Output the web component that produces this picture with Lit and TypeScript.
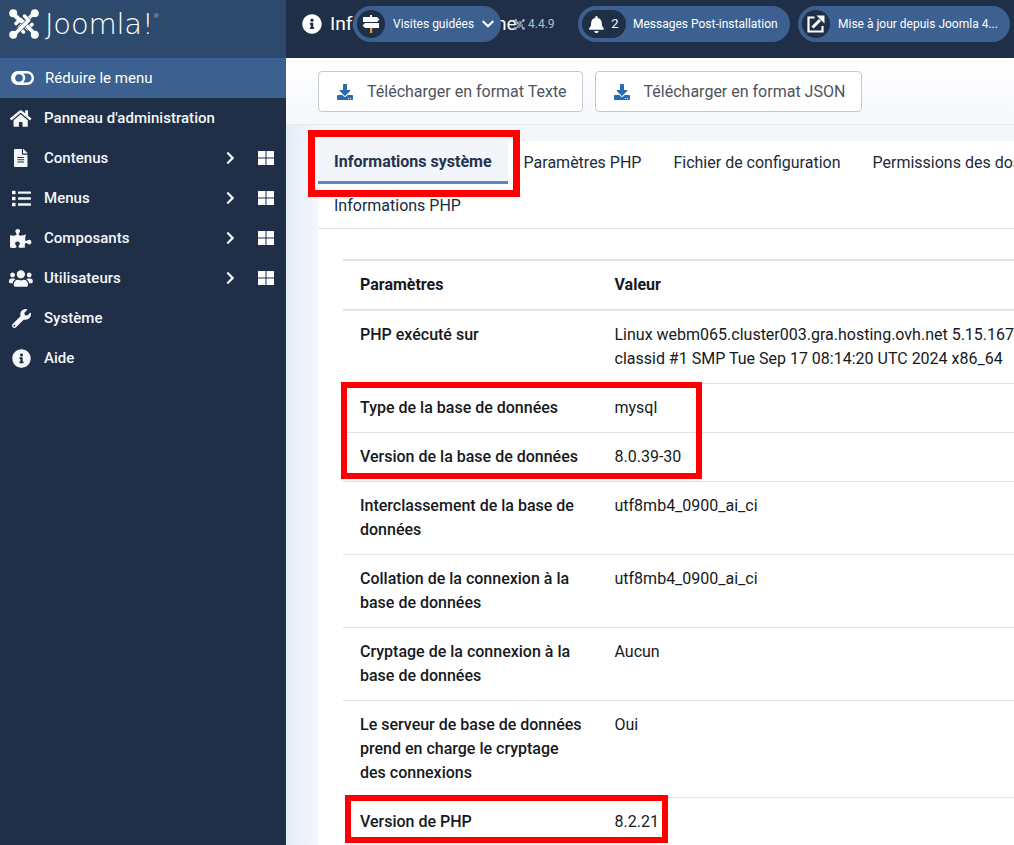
import { LitElement, html, css, svg } from "lit";
import { customElement } from "lit/decorators.js";

const P: Record<string, [number, string]> = {
  info: [512, "M256 8C119.043 8 8 119.083 8 256c0 136.997 111.043 248 248 248s248-111.003 248-248C504 119.083 392.957 8 256 8zm0 110c23.196 0 42 18.804 42 42s-18.804 42-42 42-42-18.804-42-42 18.804-42 42-42zm56 254c0 6.627-5.373 12-12 12h-88c-6.627 0-12-5.373-12-12v-24c0-6.627 5.373-12 12-12h12v-64h-12c-6.627 0-12-5.373-12-12v-24c0-6.627 5.373-12 12-12h64c6.627 0 12 5.373 12 12v100h12c6.627 0 12 5.373 12 12v24z"],
  home: [576, "M280.37 148.26L96 300.11V464a16 16 0 0 0 16 16l112.06-.29a16 16 0 0 0 15.92-16V368a16 16 0 0 1 16-16h64a16 16 0 0 1 16 16v95.64a16 16 0 0 0 16 16.05L464 480a16 16 0 0 0 16-16V300L295.67 148.26a12.19 12.19 0 0 0-15.3 0zM571.6 251.47L488 182.56V44.05a12 12 0 0 0-12-12h-56a12 12 0 0 0-12 12v72.61L318.47 43a48 48 0 0 0-61 0L4.34 251.47a12 12 0 0 0-1.6 16.9l25.5 31A12 12 0 0 0 45.15 301l235.22-193.74a12.19 12.19 0 0 1 15.3 0L530.9 301a12 12 0 0 0 16.9-1.6l25.5-31a12 12 0 0 0-1.7-16.93z"],
  file: [384, "M224 136V0H24C10.7 0 0 10.7 0 24v464c0 13.3 10.7 24 24 24h336c13.3 0 24-10.7 24-24V160H248c-13.2 0-24-10.8-24-24zm64 236c0 6.6-5.4 12-12 12H108c-6.6 0-12-5.4-12-12v-8c0-6.6 5.4-12 12-12h168c6.6 0 12 5.4 12 12v8zm0-64c0 6.6-5.4 12-12 12H108c-6.6 0-12-5.4-12-12v-8c0-6.6 5.4-12 12-12h168c6.6 0 12 5.4 12 12v8zm0-72v8c0 6.6-5.4 12-12 12H108c-6.6 0-12-5.4-12-12v-8c0-6.6 5.4-12 12-12h168c6.6 0 12 5.4 12 12zm96-114.1v6.1H256V0h6.1c6.4 0 12.5 2.5 17 7l97.9 98c4.5 4.5 7 10.6 7 16.9z"],
  list: [512, "M80 368H16a16 16 0 0 0-16 16v64a16 16 0 0 0 16 16h64a16 16 0 0 0 16-16v-64a16 16 0 0 0-16-16zm0-320H16A16 16 0 0 0 0 64v64a16 16 0 0 0 16 16h64a16 16 0 0 0 16-16V64a16 16 0 0 0-16-16zm0 160H16a16 16 0 0 0-16 16v64a16 16 0 0 0 16 16h64a16 16 0 0 0 16-16v-64a16 16 0 0 0-16-16zm416 176H176a16 16 0 0 0-16 16v32a16 16 0 0 0 16 16h320a16 16 0 0 0 16-16v-32a16 16 0 0 0-16-16zm0-320H176a16 16 0 0 0-16 16v32a16 16 0 0 0 16 16h320a16 16 0 0 0 16-16V80a16 16 0 0 0-16-16zm0 160H176a16 16 0 0 0-16 16v32a16 16 0 0 0 16 16h320a16 16 0 0 0 16-16v-32a16 16 0 0 0-16-16z"],
  puzzle: [576, "M519.442 288.651c-41.519 0-59.5 31.593-82.058 31.593C377.409 320.244 432 144 432 144s-196.288 80-196.288-3.297c0-35.827 36.288-46.25 36.288-85.985C272 19.216 243.885 0 210.539 0c-34.654 0-66.366 18.891-66.366 56.346 0 41.364 31.711 59.277 31.711 81.75C175.885 207.719 0 166.758 0 166.758v333.237s178.635 41.047 178.635-28.662c0-22.473-40-40.107-40-81.471 0-37.456 29.25-56.346 63.577-56.346 33.673 0 61.788 19.216 61.788 54.717 0 39.735-36.288 50.158-36.288 85.985 0 60.803 129.675 25.73 181.23 25.73 0 0-34.725-120.101 25.827-120.101 35.962 0 46.423 36.152 86.308 36.152C556.712 416 576 387.99 576 354.443c0-34.199-18.962-65.792-56.558-65.792z"],
  users: [640, "M96 224c35.3 0 64-28.7 64-64s-28.7-64-64-64-64 28.7-64 64 28.7 64 64 64zm448 0c35.3 0 64-28.7 64-64s-28.7-64-64-64-64 28.7-64 64 28.7 64 64 64zm32 32h-64c-17.6 0-33.5 7.1-45.1 18.6 40.3 22.1 68.9 62 75.1 109.4h66c17.7 0 32-14.3 32-32v-32c0-35.3-28.7-64-64-64zm-256 0c61.9 0 112-50.1 112-112S381.9 32 320 32 208 82.1 208 144s50.1 112 112 112zm76.8 32h-8.3c-20.8 10-43.9 16-68.5 16s-47.6-6-68.5-16h-8.3C179.6 288 128 339.6 128 403.2V432c0 26.5 21.5 48 48 48h288c26.5 0 48-21.5 48-48v-28.8c0-63.6-51.6-115.2-115.2-115.2zm-223.7-13.4C161.5 263.1 145.6 256 128 256H64c-35.3 0-64 28.7-64 64v32c0 17.7 14.3 32 32 32h65.9c6.3-47.4 34.9-87.3 75.2-109.4z"],
  wrench: [512, "M507.73 109.1c-2.24-9.03-13.54-12.09-20.12-5.51l-74.36 74.36-67.88-11.31-11.31-67.88 74.36-74.36c6.62-6.62 3.43-17.9-5.66-20.16-47.38-11.74-99.55.91-136.58 37.93-39.64 39.64-50.55 97.1-34.05 147.2L18.74 402.76c-24.99 24.99-24.99 65.51 0 90.5 24.99 24.99 65.51 24.99 90.5 0l213.21-213.21c50.12 16.71 107.47 5.68 147.37-34.22 37.07-37.07 49.7-89.32 37.91-136.73zM64 472c-13.25 0-24-10.75-24-24 0-13.26 10.75-24 24-24s24 10.74 24 24c0 13.25-10.75 24-24 24z"],
  bell: [448, "M224 512c35.32 0 63.97-28.65 63.97-64H160.03c0 35.35 28.65 64 63.97 64zm215.39-149.71c-19.32-20.76-55.47-51.99-55.47-154.29 0-77.7-54.48-139.9-127.94-155.16V32c0-17.67-14.32-32-31.98-32s-31.98 14.33-31.98 32v20.84C118.56 68.1 64.08 130.3 64.08 208c0 102.3-36.15 133.53-55.47 154.29-6 6.45-8.66 14.16-8.61 21.71.11 16.4 12.98 32 32.1 32h383.8c19.12 0 32-15.6 32.1-32 .05-7.55-2.61-15.27-8.61-21.71z"],
  download: [512, "M216 0h80c13.3 0 24 10.7 24 24v168h87.7c17.8 0 26.7 21.5 14.1 34.1L269.7 378.3c-7.5 7.5-19.8 7.5-27.3 0L90.1 226.1c-12.6-12.6-3.7-34.1 14.1-34.1H192V24c0-13.3 10.7-24 24-24zm296 376v112c0 13.3-10.7 24-24 24H24c-13.3 0-24-10.7-24-24V376c0-13.3 10.7-24 24-24h146.7l49 49c20.1 20.1 52.5 20.1 72.6 0l49-49H488c13.3 0 24 10.7 24 24zm-124 88c0-11-9-20-20-20s-20 9-20 20 9 20 20 20 20-9 20-20zm64 0c0-11-9-20-20-20s-20 9-20 20 9 20 20 20 20-9 20-20z"],
  right: [320, "M285.476 272.971L91.132 467.314c-9.373 9.373-24.569 9.373-33.941 0l-22.667-22.667c-9.357-9.357-9.375-24.522-.04-33.901L188.505 256 34.484 101.255c-9.335-9.379-9.317-24.544.04-33.901l22.667-22.667c9.373-9.373 24.569-9.373 33.941 0L285.475 239.03c9.373 9.372 9.373 24.568.001 33.941z"],
  down: [448, "M207.029 381.476L12.686 187.132c-9.373-9.373-9.373-24.569 0-33.941l22.667-22.667c9.357-9.357 24.522-9.375 33.901-.04L224 284.505l154.745-154.021c9.379-9.335 24.544-9.317 33.901.04l22.667 22.667c9.373 9.373 9.373 24.569 0 33.941L240.971 381.476c-9.373 9.372-24.569 9.372-33.942 0z"],
};

const icon = (name: string, h: number, color = "currentColor") => {
  const [w, d] = P[name];
  const s = h / 512;
  return html`<svg width=${w * s} height=${h} viewBox="0 0 ${w} 512" fill=${color} fill-rule="evenodd">${svg`<path d=${d}></path>`}</svg>`;
};

const BANDS = ["M5 6 L20 21 L24.500 16.500", "M26 5 L11 20 L15.500 24.500", "M27 26 L12 11 L7.500 15.500", "M6 27 L21 12 L16.500 7.500"];

const joomlaMark = (size: number, color: string, halo: string) => html`<svg width=${size} height=${size} viewBox="0 0 32 32" fill="none" stroke-linecap="round" stroke-linejoin="round">
  ${BANDS.map((d) => svg`
    <path d=${d} stroke=${halo} stroke-width="4.800"></path>
    <path d=${d} stroke=${color} stroke-width="3.800"></path>`)}
  <path d="M13 13 L8 8" stroke=${color} stroke-width="3.800"></path>
  <g fill=${color}>
    <circle cx="4.500" cy="4.500" r="4.200"></circle><circle cx="27.500" cy="4.500" r="4.200"></circle>
    <circle cx="4.500" cy="27.500" r="4.200"></circle><circle cx="27.500" cy="27.500" r="4.200"></circle>
  </g>
</svg>`;

const toggleIcon = html`<svg width="23" height="14" viewBox="0 0 23 14" fill="none" stroke="#fff">
  <rect x="1.200" y="1.200" width="20.600" height="11.600" rx="5.800" stroke-width="2.400"></rect>
  <circle cx="8" cy="7" r="5" stroke-width="2.400"></circle>
</svg>`;

const gridIcon = html`<svg width="16" height="14" viewBox="0 0 16 14" fill="#fff">
  <rect x="0" y="0" width="7.500" height="6.500"></rect><rect x="8.500" y="0" width="7.500" height="6.500"></rect>
  <rect x="0" y="7.500" width="7.500" height="6.500"></rect><rect x="8.500" y="7.500" width="7.500" height="6.500"></rect>
</svg>`;

const signsIcon = html`<svg width="18" height="18" viewBox="0 0 18 18" fill="#fff">
  <rect x="8" y="0" width="2" height="2"></rect>
  <path d="M1 2h14l2.500 2.500L15 7H1z"></path>
  <path d="M17 8H3L.5 10.500 3 13h14z"></path>
  <rect x="8" y="13" width="2.200" height="5" fill="#e8a33d"></rect>
</svg>`;

const linkIcon = html`<svg width="18" height="18" viewBox="0 0 18 18" fill="none" stroke="#fff" stroke-width="2.200">
  <path d="M7.500 2.500H1.500v14h14V11"></path>
  <path d="M5.500 12.500 13 5" stroke-width="3"></path>
  <path d="M9.500 0.500h8v8z" fill="#fff" stroke="none"></path>
</svg>`;

const MENU: [string, string, boolean, number][] = [
  ["home", "Panneau d'administration", false, 19],
  ["file", "Contenus", true, 18],
  ["list", "Menus", true, 19],
  ["puzzle", "Composants", true, 19],
  ["users", "Utilisateurs", true, 19],
  ["wrench", "Système", false, 19],
  ["info", "Aide", false, 19],
];

const ROWS: [string, unknown][] = [
  ["PHP exécuté sur", html`Linux webm065.cluster003.gra.hosting.ovh.net 5.15.167-ovh-vps-grsec-zfs-<br />classid #1 SMP Tue Sep 17 08:14:20 UTC 2024 x86_64`],
  ["Type de la base de données", "mysql"],
  ["Version de la base de données", "8.0.39-30"],
  ["Interclassement de la base de données", "utf8mb4_0900_ai_ci"],
  ["Collation de la connexion à la base de données", "utf8mb4_0900_ai_ci"],
  ["Cryptage de la connexion à la base de données", "Aucun"],
  ["Le serveur de base de données prend en charge le cryptage des connexions", "Oui"],
  ["Version de PHP", "8.2.21"],
];

@customElement("app-root")
export class AppRoot extends LitElement {
  static styles = css`
    :host {
      display: block;
      position: relative;
      width: 100vw;
      height: 100vh;
      overflow: hidden;
      font-family: Roboto, "Liberation Sans", sans-serif;
      font-size: 16px;
      line-height: 24px;
      color: #16191d;
    }
    .app { display: grid; grid-template-columns: 286px 1fr; height: 845px; }
    .side { background: #1f2f47; color: #fff; }
    .logo { height: 58px; background: #2d4a6d; display: flex; align-items: center; padding-left: 9px; gap: 6px; box-sizing: border-box; padding-bottom: 10px; padding-top: 0; }
    .word { font-family: "DejaVu Sans", sans-serif; font-weight: 200; font-size: 29px; letter-spacing: -0.2px; line-height: 30px; position: relative; }
    .word sup { position: absolute; font-size: 6px; line-height: 6px; top: 4px; right: -5px; font-family: Roboto, sans-serif; }
    .item { height: 40px; display: flex; align-items: center; font-size: 15px; letter-spacing: .03px; font-weight: 500; padding-right: 12px; color: #f4f6f9; }
    .item .ico { width: 44px; display: flex; justify-content: center; padding-right: 2px; box-sizing: border-box; flex: none; }
    .item .label { flex: 1; }
    .item .chev { margin-right: 23px; display: flex; }
    .item.toggle { background: #3c6190; color: #fff; font-weight: 400; }
    .item.toggle .ico { width: 45px; padding-right: 1px; }
    .main { min-width: 0; overflow: hidden; background: linear-gradient(90deg, #e6ecf6 0, #f3f6fb 32px); }
    .head { height: 58px; background: #1f2f47; color: #fff; display: flex; padding-top: 6px; box-sizing: border-box; }
    .head-left { width: 292px; flex: none; position: relative; display: flex; height: 36px; align-items: center; padding-left: 16px; gap: 8px; box-sizing: border-box; white-space: nowrap; }
    .title { font-size: 19.200px; font-weight: 400; }
    .version { position: absolute; left: 228px; top: 9px; display: flex; align-items: center; gap: 3px; font-size: 12px; line-height: 18px; color: #b5bfcc; }
    .pill { height: 36px; border-radius: 18px; background: #3c6190; display: flex; align-items: center; color: #fff; font-size: 12px; box-sizing: border-box; padding: 4px; white-space: nowrap; }
    .pill .round { height: 28px; min-width: 28px; border-radius: 14px; background: #1f2f47; display: flex; align-items: center; justify-content: center; gap: 7px; flex: none; }
    .tour { position: absolute; left: 67px; top: 0; width: 148px; }
    .tour .round { margin-right: 8px; }
    .tour svg.dn { margin-left: 8px; }
    .notify { width: 212px; margin-right: 8px; }
    .notify .round { padding: 0 7px; margin-right: 7px; font-size: 13px; box-sizing: border-box; width: 44px; }
    .update { width: 212px; }
    .update .round { margin-right: 8px; }
    .toolbar { height: 67px; box-sizing: border-box; background: linear-gradient(#fff, #f5f7fb); border-bottom: 1px solid #e7ebf2; display: flex; gap: 12px; padding: 13px 0 0 32px; }
    .btn { height: 41px; box-sizing: border-box; border: 1px solid #c3c9d4; border-radius: 4px; background: #fff; color: #4c5361; display: flex; align-items: center; gap: 14px; padding: 0 15px 0 18px; white-space: nowrap; }
    .btn + .btn { padding-right: 16px; }
    .card { margin: 16px 0 0 32px; width: 760px; background: #fff; }
    .tabs { display: flex; flex-wrap: wrap; align-items: flex-start; border-bottom: 1px solid #dfe3e8; }
    .tab { height: 44px; padding: 0 16px; display: flex; align-items: center; box-sizing: border-box; color: #1c2a3e; white-space: nowrap; }
    .tab.on { height: 43px; background: #f2f5f9; font-weight: 700; color: #24344e; border-bottom: 3px solid #5b87c4; padding-top: 2px; }
    .tab.last { margin-top: -1px; }
    .body { padding: 30px 24px 0 25px; }
    table { border-collapse: collapse; width: 100%; table-layout: fixed; }
    col.a { width: 254.500px; }
    th, td { text-align: left; vertical-align: top; padding: 12px 10px 12px 17px; border-bottom: 1px solid #e1e3e8; font-weight: 400; }
    td.k { font-weight: 500; }
    th { font-weight: 700; border-top: 2px solid #dfe2e7; border-bottom: 2px solid #dfe2e7; }
    td.v { white-space: nowrap; overflow: hidden; }
    .mark { position: absolute; border: 6.500px solid #f00; box-sizing: border-box; pointer-events: none; }
    .m1 { left: 308px; top: 130px; width: 212px; height: 67px; border-width: 7px; }
    .m2 { left: 341px; top: 382px; width: 361px; height: 97px; }
    .m3 { left: 345px; top: 795px; width: 323px; height: 48px; }
  `;

  render() {
    return html`
      <div class="app">
        <aside class="side">
          <div class="logo">${joomlaMark(30, "#fff", "#2d4a6d")}<span class="word">Joomla!<sup>®</sup></span></div>
          <div class="item toggle"><span class="ico">${toggleIcon}</span><span class="label">Réduire le menu</span></div>
          ${MENU.map(([ic, label, more, h]) => html`
            <div class="item">
              <span class="ico">${icon(ic, h)}</span>
              <span class="label">${label}</span>
              ${more ? html`<span class="chev">${icon("right", 14)}</span>${gridIcon}` : ""}
            </div>`)}
        </aside>
        <main class="main">
          <header class="head">
            <div class="head-left">
              ${icon("info", 20)}
              <span class="title">Informations système</span>
              <span class="version">${joomlaMark(11, "#9aa7b8", "#1f2f47")}4.4.9</span>
              <div class="pill tour">
                <span class="round">${signsIcon}</span>Visites guidées
                <svg class="dn" width="12" height="14" viewBox="0 0 448 512" fill="#fff"><path d=${P.down[1]}></path></svg>
              </div>
            </div>
            <div class="pill notify"><span class="round">${icon("bell", 17)}2</span>Messages Post-installation</div>
            <div class="pill update"><span class="round">${linkIcon}</span>Mise à jour depuis Joomla 4...</div>
          </header>
          <div class="toolbar">
            <div class="btn">${icon("download", 16, "#2a69b8")}Télécharger en format Texte</div>
            <div class="btn">${icon("download", 16, "#2a69b8")}Télécharger en format JSON</div>
          </div>
          <section class="card">
            <div class="tabs">
              <div class="tab on">Informations système</div>
              <div class="tab">Paramètres PHP</div>
              <div class="tab">Fichier de configuration</div>
              <div class="tab">Permissions des dossiers</div>
              <div class="tab last">Informations PHP</div>
            </div>
            <div class="body">
              <table>
                <colgroup><col class="a" /><col /></colgroup>
                <thead><tr><th>Paramètres</th><th>Valeur</th></tr></thead>
                <tbody>
                  ${ROWS.map(([k, v]) => html`<tr><td class="k">${k}</td><td class="v">${v}</td></tr>`)}
                </tbody>
              </table>
            </div>
          </section>
        </main>
      </div>
      <div class="mark m1"></div>
      <div class="mark m2"></div>
      <div class="mark m3"></div>
    `;
  }
}
